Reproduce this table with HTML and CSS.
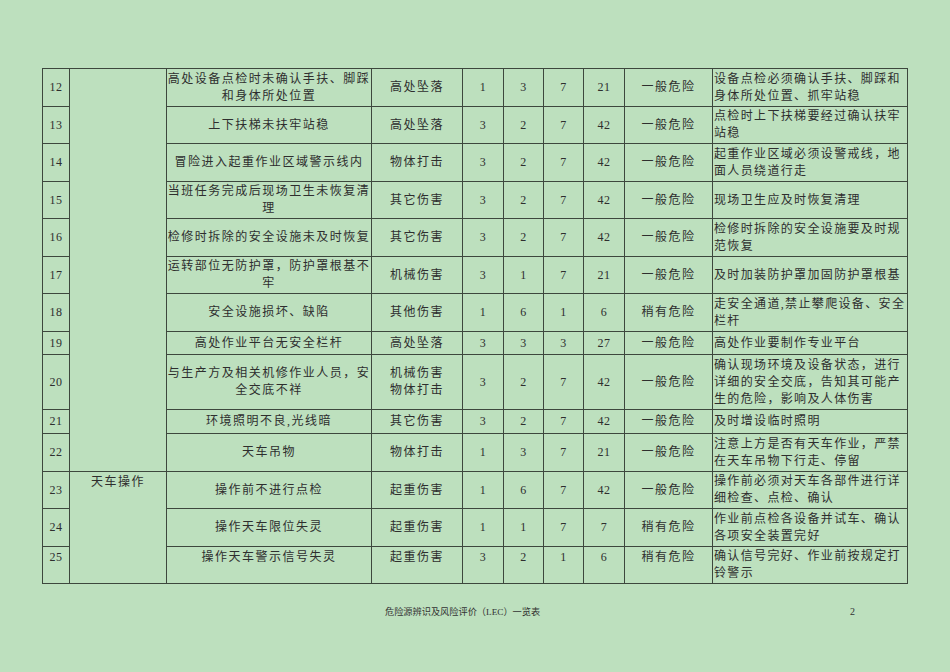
FILE: index.html
```html
<!DOCTYPE html>
<html lang="zh-CN">
<head>
<meta charset="utf-8">
<title>危险源辨识及风险评价（LEC）一览表</title>
<link rel="stylesheet" href="styles.css">
</head>
<body>
<div class="page">
  <table class="lec">
    <colgroup>
      <col class="c-no"><col class="c-act"><col class="c-desc"><col class="c-type">
      <col class="c-n"><col class="c-n2"><col class="c-n2"><col class="c-n"><col class="c-lvl"><col class="c-meas">
    </colgroup>
    <tbody>
      <tr class="r38">
        <td class="num">12</td>
        <td class="act" rowspan="11"></td>
        <td class="desc">高处设备点检时未确认手扶、脚踩和身体所处位置</td>
        <td class="ctr">高处坠落</td><td class="num">1</td><td class="num">3</td><td class="num">7</td><td class="num">21</td>
        <td class="ctr">一般危险</td><td class="meas">设备点检必须确认手扶、脚踩和身体所处位置、抓牢站稳</td>
      </tr>
      <tr class="r37">
        <td class="num">13</td>
        <td class="desc">上下扶梯未扶牢站稳</td>
        <td class="ctr">高处坠落</td><td class="num">3</td><td class="num">2</td><td class="num">7</td><td class="num">42</td>
        <td class="ctr">一般危险</td><td class="meas">点检时上下扶梯要经过确认扶牢站稳</td>
      </tr>
      <tr class="r38">
        <td class="num">14</td>
        <td class="desc">冒险进入起重作业区域警示线内</td>
        <td class="ctr">物体打击</td><td class="num">3</td><td class="num">2</td><td class="num">7</td><td class="num">42</td>
        <td class="ctr">一般危险</td><td class="meas">起重作业区域必须设警戒线，地面人员绕道行走</td>
      </tr>
      <tr class="r37">
        <td class="num">15</td>
        <td class="desc">当班任务完成后现场卫生未恢复清理</td>
        <td class="ctr">其它伤害</td><td class="num">3</td><td class="num">2</td><td class="num">7</td><td class="num">42</td>
        <td class="ctr">一般危险</td><td class="meas">现场卫生应及时恢复清理</td>
      </tr>
      <tr class="r38">
        <td class="num">16</td>
        <td class="desc">检修时拆除的安全设施未及时恢复</td>
        <td class="ctr">其它伤害</td><td class="num">3</td><td class="num">2</td><td class="num">7</td><td class="num">42</td>
        <td class="ctr">一般危险</td><td class="meas">检修时拆除的安全设施要及时规范恢复</td>
      </tr>
      <tr class="r37">
        <td class="num">17</td>
        <td class="desc">运转部位无防护罩，防护罩根基不牢</td>
        <td class="ctr">机械伤害</td><td class="num">3</td><td class="num">1</td><td class="num">7</td><td class="num">21</td>
        <td class="ctr">一般危险</td><td class="meas">及时加装防护罩加固防护罩根基</td>
      </tr>
      <tr class="r38">
        <td class="num">18</td>
        <td class="desc">安全设施损坏、缺陷</td>
        <td class="ctr">其他伤害</td><td class="num">1</td><td class="num">6</td><td class="num">1</td><td class="num">6</td>
        <td class="ctr">稍有危险</td><td class="meas">走安全通道,禁止攀爬设备、安全栏杆</td>
      </tr>
      <tr class="r23">
        <td class="num">19</td>
        <td class="desc">高处作业平台无安全栏杆</td>
        <td class="ctr">高处坠落</td><td class="num">3</td><td class="num">3</td><td class="num">3</td><td class="num">27</td>
        <td class="ctr">一般危险</td><td class="meas">高处作业要制作专业平台</td>
      </tr>
      <tr class="r55">
        <td class="num">20</td>
        <td class="desc">与生产方及相关机修作业人员，安全交底不祥</td>
        <td class="ctr">机械伤害<br>物体打击</td><td class="num">3</td><td class="num">2</td><td class="num">7</td><td class="num">42</td>
        <td class="ctr">一般危险</td><td class="meas">确认现场环境及设备状态，进行详细的安全交底，告知其可能产生的危险，影响及人体伤害</td>
      </tr>
      <tr class="r24">
        <td class="num">21</td>
        <td class="desc">环境照明不良,光线暗</td>
        <td class="ctr">其它伤害</td><td class="num">3</td><td class="num">2</td><td class="num">7</td><td class="num">42</td>
        <td class="ctr">一般危险</td><td class="meas">及时增设临时照明</td>
      </tr>
      <tr class="r38">
        <td class="num">22</td>
        <td class="desc">天车吊物</td>
        <td class="ctr">物体打击</td><td class="num">1</td><td class="num">3</td><td class="num">7</td><td class="num">21</td>
        <td class="ctr">一般危险</td><td class="meas">注意上方是否有天车作业，严禁在天车吊物下行走、停留</td>
      </tr>
      <tr class="r37">
        <td class="num">23</td>
        <td class="act top" rowspan="3">天车操作</td>
        <td class="desc">操作前不进行点检</td>
        <td class="ctr">起重伤害</td><td class="num">1</td><td class="num">6</td><td class="num">7</td><td class="num">42</td>
        <td class="ctr">一般危险</td><td class="meas">操作前必须对天车各部件进行详细检查、点检、确认</td>
      </tr>
      <tr class="r38">
        <td class="num">24</td>
        <td class="desc">操作天车限位失灵</td>
        <td class="ctr">起重伤害</td><td class="num">1</td><td class="num">1</td><td class="num">7</td><td class="num">7</td>
        <td class="ctr">稍有危险</td><td class="meas">作业前点检各设备并试车、确认各项安全装置完好</td>
      </tr>
      <tr class="r37 top">
        <td class="num">25</td>
        <td class="desc">操作天车警示信号失灵</td>
        <td class="ctr">起重伤害</td><td class="num">3</td><td class="num">2</td><td class="num">1</td><td class="num">6</td>
        <td class="ctr">稍有危险</td><td class="meas">确认信号完好、作业前按规定打铃警示</td>
      </tr>
    </tbody>
  </table>
  <div class="footer">
    <span class="footer-title">危险源辨识及风险评价（LEC）一览表</span>
    <span class="footer-page">2</span>
  </div>
</div>
</body>
</html>
```

FILE: styles.css
```css
html, body {
  margin: 0;
  padding: 0;
  background: #bde0be;
}

body {
  width: 950px;
  height: 672px;
  overflow: hidden;
  font-family: "Liberation Serif", "Noto Sans CJK SC", serif;
  color: #2e2e2e;
}

.page {
  padding: 68px 0 0 42px;
}

.lec {
  border-collapse: collapse;
  table-layout: fixed;
  width: 866px;
  font-size: 12px;
  line-height: 17px;
  letter-spacing: 1.5px;
}

.c-no { width: 27px; }
.c-act { width: 97px; }
.c-desc { width: 205px; }
.c-type { width: 91px; }
.c-n { width: 41px; }
.c-n2 { width: 40px; }
.c-lvl { width: 88px; }
.c-meas { width: 195px; }

.lec td {
  border: 1px solid #3d473d;
  padding: 0;
  vertical-align: middle;
  text-align: center;
  overflow: hidden;
}

.lec td.num {
  letter-spacing: 0.6px;
  font-size: 12px;
}

.lec td.desc {
  padding: 0;
}

.lec td.meas {
  text-align: left;
  padding-left: 1px;
  letter-spacing: 1.35px;
}

.lec td.act.top,
.lec tr.top td {
  vertical-align: top;
  padding-top: 2px;
}

.lec tr.top td.meas {
  padding-top: 1px;
}

.r38 { height: 38px; }
.r37 { height: 37px; }
.r23 { height: 23px; }
.r24 { height: 24px; }
.r55 { height: 55px; }

.footer {
  display: flex;
  align-items: center;
  margin-top: 22px;
  font-size: 9.2px;
  line-height: 12px;
  color: #333;
}

.footer-title {
  margin-left: 343px;
}

.footer-page {
  margin-left: auto;
  margin-right: 95px;
  font-size: 10px;
}
```
